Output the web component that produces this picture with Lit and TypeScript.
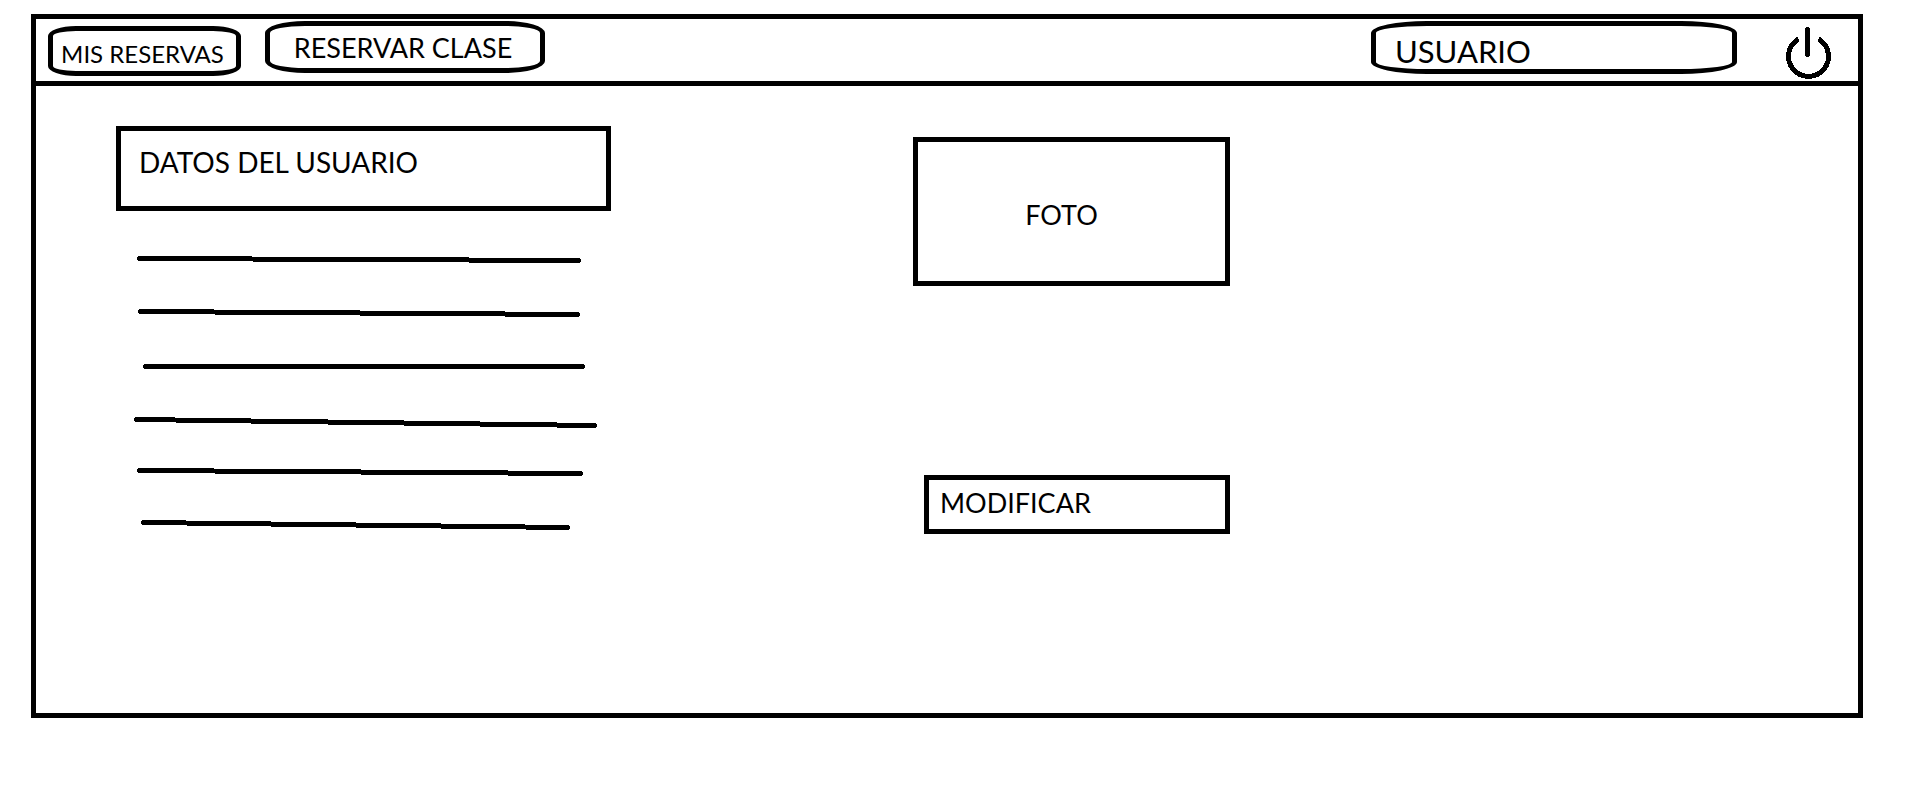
import { LitElement, html, css, svg } from "lit";
import { customElement } from "lit/decorators.js";

type Stroke = [x1: number, y1: number, x2: number, y2: number];

// Placeholder rows under the user data heading.
const ROWS: Stroke[] = [
  [23.5, 47.5, 462.5, 49.5],
  [24.5, 100.5, 461.5, 103.5],
  [29.5, 155.5, 466.5, 155.5],
  [20.5, 208.5, 478.5, 214.5],
  [23.5, 259.5, 464.5, 262.5],
  [27.5, 311.5, 451.5, 316.5],
];

@customElement("app-root")
export class AppRoot extends LitElement {
  static styles = css`
    :host {
      display: block;
      box-sizing: border-box;
      min-height: 100vh;
      padding: 14px 51px 72px 31px;
      background: #fff;
      color: #000;
      font-family: Lato, "Noto Sans", sans-serif;
      font-size: 27px;
      line-height: 32px;
    }
    * {
      box-sizing: border-box;
    }
    button {
      margin: 0;
      border: 5px solid #000;
      background: #fff;
      color: inherit;
      font: inherit;
      cursor: pointer;
    }
    .frame {
      border: 5px solid #000;
    }
    .bar {
      display: flex;
      align-items: flex-start;
      height: 67px;
      padding: 2px 24px 0 12px;
      border-bottom: 5px solid #000;
    }
    .bookings {
      align-self: center;
      width: 193px;
      height: 50px;
      padding: 6px 4px 0 0;
      border-radius: 28px / 10px;
      font-size: 24px;
      white-space: nowrap;
    }
    .reserve {
      width: 280px;
      height: 52px;
      margin-left: 24px;
      padding: 2px 4px 0 0;
      border-radius: 40px / 12px;
    }
    .user {
      width: 366px;
      height: 53px;
      margin-left: auto;
      padding: 6px 19px 0;
      border-radius: 56px / 12px;
      font-size: 31px;
      text-align: left;
    }
    .power {
      align-self: center;
      display: block;
      width: 52px;
      height: 54px;
      margin-left: 45px;
      padding: 0;
      border: 0;
      background: none;
    }
    .icon,
    .rows {
      display: block;
      width: 100%;
      overflow: visible;
      fill: none;
      stroke: #000;
      stroke-width: 5;
      stroke-linecap: round;
      shape-rendering: crispEdges;
    }
    .ring {
      stroke-linecap: butt;
    }
    .content {
      display: grid;
      grid-template-columns: 495fr 302fr 317fr 628fr;
      align-items: start;
      padding: 40px 0 179px 80px;
    }
    .title {
      height: 85px;
      margin: 0;
      padding: 15px 18px;
      border: 5px solid #000;
      font-size: 28px;
      font-weight: 400;
      line-height: 32px;
    }
    .side {
      grid-column: 3;
      display: flex;
      flex-direction: column;
      padding-top: 11px;
    }
    .photo {
      display: flex;
      align-items: center;
      justify-content: center;
      height: 149px;
      margin: 0;
      padding: 6px 20px 0 0;
      border: 5px solid #000;
    }
    .edit {
      height: 59px;
      margin: 189px 0 0 11px;
      padding: 0 11px 4px;
      text-align: left;
    }
  `;

  render() {
    return html`
      <div class="frame">
        <header class="bar">
          <button class="bookings" type="button">MIS RESERVAS</button>
          <button class="reserve" type="button">RESERVAR CLASE</button>
          <button class="user" type="button">USUARIO</button>
          <button class="power" type="button" aria-label="Salir">
            <svg class="icon" viewBox="0 0 52 54" aria-hidden="true">
              <path class="ring" d="M16.5 15A20 20 0 1 0 36.5 15" />
              <path d="M25.5 5.5V30.5" />
            </svg>
          </button>
        </header>
        <main class="content">
          <section>
            <h1 class="title">DATOS DEL USUARIO</h1>
            <svg class="rows" viewBox="0 0 495 323" aria-hidden="true">
              ${ROWS.map(
                ([x1, y1, x2, y2]) =>
                  svg`<line x1=${x1} y1=${y1} x2=${x2} y2=${y2} />`
              )}
            </svg>
          </section>
          <div class="side">
            <figure class="photo">FOTO</figure>
            <button class="edit" type="button">MODIFICAR</button>
          </div>
        </main>
      </div>
    `;
  }
}
